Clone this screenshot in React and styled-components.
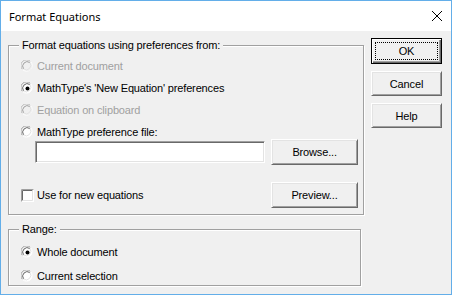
import React from "react";
import styled, { createGlobalStyle } from "styled-components";

const Global = createGlobalStyle`
  html, body { margin: 0; padding: 0; background: #ffffff; }
  body { font-family: "Liberation Sans", Arial, sans-serif; }
  * { box-sizing: border-box; }
`;

const Window = styled.div`
  width: 452px;
  height: 295px;
  border: 1px solid #63aee9;
  background: #f0f0f0;
  display: flex;
  flex-direction: column;
`;

const TitleBar = styled.div`
  height: 30px;
  background: #ffffff;
  display: flex;
  align-items: center;
  justify-content: space-between;
  padding: 0 9px 0 8px;
  font-family: "Noto Sans", "Open Sans", sans-serif;
  font-size: 11px;
  color: #000;
`;

const CloseIcon = styled.svg`
  width: 10px;
  height: 10px;
`;

const Body = styled.div`
  flex: 1;
  display: flex;
  gap: 7px;
  padding: 0 0 0 7px;
  font-family: "Liberation Sans", Arial, sans-serif;
  font-size: 11px;
  letter-spacing: -0.15px;
  color: #000;
`;

const LeftCol = styled.div`
  display: flex;
  flex-direction: column;
  padding-top: 14px;
`;

const Group = styled.div`
  position: relative;
  width: ${(p) => p.$w}px;
  height: ${(p) => p.$h}px;
  margin-top: ${(p) => p.$mt || 0}px;
  border: 1px solid #a0a0a0;
  box-shadow: inset 1px 1px 0 #ffffff, 1px 1px 0 #ffffff;
  padding: ${(p) => p.$pt}px 5px 0 12px;
  display: flex;
  flex-direction: column;
`;

const Legend = styled.span`
  position: absolute;
  top: -7px;
  left: 10px;
  padding: 0 3px;
  background: #f0f0f0;
  line-height: 13px;
`;

const OptionList = styled.div`
  display: flex;
  flex-direction: column;
  gap: ${(p) => p.$gap}px;
`;

const Option = styled.label`
  display: flex;
  align-items: center;
  gap: 3px;
  height: 14px;
  line-height: 14px;
  color: ${(p) => (p.$disabled ? "#a0a0a0" : "#000")};
  white-space: nowrap;
`;

const FileRow = styled.div`
  display: flex;
  align-items: center;
  height: 26px;
  padding-left: 14px;
  gap: 6px;
`;

const TextBox = styled.div`
  width: 231px;
  height: 22px;
  background: #fff;
  border-style: solid;
  border-width: 1px;
  border-color: #a0a0a0 #fff #fff #a0a0a0;
  box-shadow: inset 1px 1px 0 #696969, inset -1px -1px 0 #e3e3e3;
`;

const CheckRow = styled.div`
  display: flex;
  align-items: center;
  justify-content: space-between;
  height: 26px;
  margin-top: 17px;
`;

const Button = styled.div`
  width: ${(p) => p.$w || 71}px;
  height: ${(p) => p.$h || 25}px;
  background: #f0f0f0;
  display: flex;
  align-items: center;
  justify-content: center;
  position: relative;
  border-style: solid;
  border-width: 1px;
  border-color: ${(p) =>
    p.$default ? "#000 #000 #000 #000" : "#ffffff #696969 #696969 #ffffff"};
  box-shadow: ${(p) =>
    p.$default
      ? "inset 1px 1px 0 #fff, inset -1px -1px 0 #696969, inset -2px -2px 0 #a0a0a0"
      : "inset 1px 1px 0 #e3e3e3, inset -1px -1px 0 #a0a0a0"};
  font-size: 11px;
  color: #000;
`;

const FocusRect = styled.div`
  position: absolute;
  inset: 3px;
  border: 1px dotted #000;
`;

const RightCol = styled.div`
  display: flex;
  flex-direction: column;
  gap: 7px;
  padding-top: 7px;
`;

function Radio({ checked, disabled }) {
  return (
    <svg width="13" height="13" viewBox="0 0 13 13" style={{ flex: "none" }}>
      <path d="M1.5 9.5 A5.5 5.5 0 0 1 9.5 1.5" fill="none" stroke={disabled ? "#b8b8b8" : "#a0a0a0"} strokeWidth="1" />
      <path d="M9.5 1.5 A5.5 5.5 0 0 1 1.5 9.5" fill="none" stroke="#ffffff" strokeWidth="1" />
      <circle cx="6.5" cy="6.5" r="4.5" fill={disabled ? "#f0f0f0" : "#ffffff"} />
      <path d="M2.6 8.9 A4.5 4.5 0 0 1 8.9 2.6" fill="none" stroke={disabled ? "#a0a0a0" : "#696969"} strokeWidth="1" />
      <path d="M8.9 2.6 A4.5 4.5 0 0 1 2.6 8.9" fill="none" stroke="#e3e3e3" strokeWidth="1" />
      {checked && <circle cx="6.5" cy="6.5" r="2" fill="#000" />}
    </svg>
  );
}

function Checkbox() {
  return (
    <svg width="13" height="13" viewBox="0 0 13 13" style={{ flex: "none" }}>
      <rect x="0" y="0" width="13" height="13" fill="#ffffff" />
      <path d="M0.5 12.5 V0.5 H12.5" fill="none" stroke="#a0a0a0" />
      <path d="M1.5 11.5 V1.5 H11.5" fill="none" stroke="#696969" />
      <path d="M1.5 11.5 H11.5 V1.5" fill="none" stroke="#e3e3e3" />
    </svg>
  );
}

export default function App() {
  return (
    <>
      <Global />
      <Window>
        <TitleBar>
          <span>Format Equations</span>
          <CloseIcon viewBox="0 0 10 10">
            <path d="M0 0 L10 10 M10 0 L0 10" stroke="#000" strokeWidth="1" />
          </CloseIcon>
        </TitleBar>
        <Body>
          <LeftCol>
            <Group $w={356} $h={170} $pt={13}>
              <Legend>Format equations using preferences from:</Legend>
              <OptionList $gap={8}>
                <Option $disabled>
                  <Radio disabled />
                  Current document
                </Option>
                <Option>
                  <Radio checked />
                  MathType's 'New Equation' preferences
                </Option>
                <Option $disabled>
                  <Radio disabled />
                  Equation on clipboard
                </Option>
                <Option>
                  <Radio />
                  MathType preference file:
                </Option>
              </OptionList>
              <FileRow>
                <TextBox />
                <Button $w={87} $h={26}>Browse...</Button>
              </FileRow>
              <CheckRow>
                <Option>
                  <Checkbox />
                  Use for new equations
                </Option>
                <Button $w={87} $h={26}>Preview...</Button>
              </CheckRow>
            </Group>
            <Group $w={353} $h={57} $mt={14} $pt={15}>
              <Legend>Range:</Legend>
              <OptionList $gap={10}>
                <Option>
                  <Radio checked />
                  Whole document
                </Option>
                <Option>
                  <Radio />
                  Current selection
                </Option>
              </OptionList>
            </Group>
          </LeftCol>
          <RightCol>
            <Button $default $h={26}>
              <FocusRect />
              OK
            </Button>
            <Button>Cancel</Button>
            <Button>Help</Button>
          </RightCol>
        </Body>
      </Window>
    </>
  );
}
